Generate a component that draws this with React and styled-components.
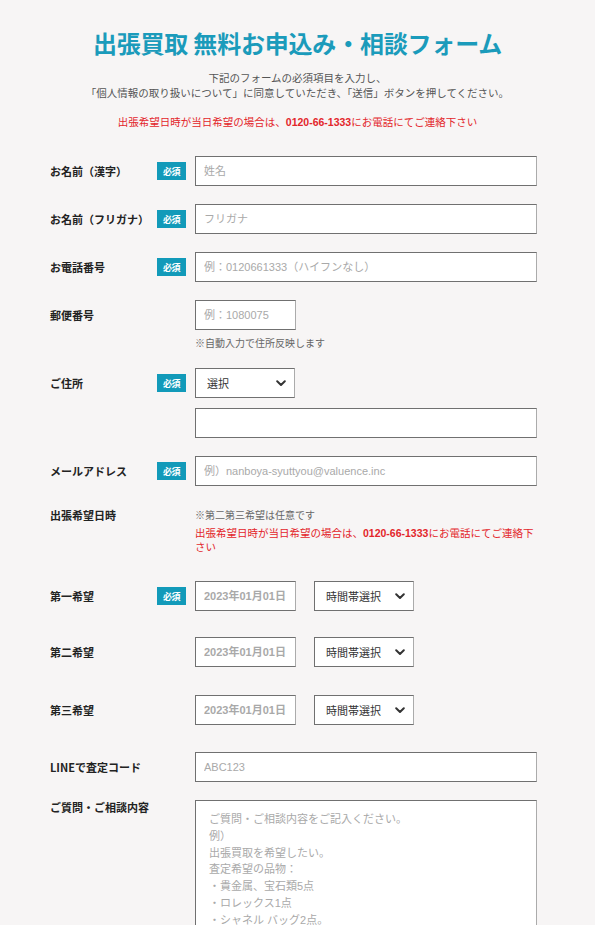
import React from "react";
import styled, { createGlobalStyle } from "styled-components";

const Global = createGlobalStyle`
  html, body { margin: 0; padding: 0; background: #f7f5f5; }
  body { font-family: "Liberation Sans", "Noto Sans CJK JP", sans-serif; color: #222; }
  * { box-sizing: border-box; }
`;

const Page = styled.div`
  width: 595px;
  min-height: 925px;
  background: #f7f5f5;
  padding-top: 28px;
  overflow: hidden;
`;

const Header = styled.header`
  text-align: center;
`;

const Title = styled.h1`
  margin: 0;
  font-size: 24px;
  line-height: 30px;
  font-weight: 700;
  color: #1b9bbb;
  letter-spacing: -0.2px;
  font-family: "Noto Sans CJK JP", sans-serif;
`;

const Lead = styled.p`
  margin: 13px 0 0;
  font-size: 10.5px;
  line-height: 14.5px;
  color: #555;
  font-family: "Noto Sans CJK JP", sans-serif;
`;

const Alert = styled.p`
  margin: ${(p) => (p.$inline ? "4px 0 0" : "15px 0 0")};
  font-size: 10.5px;
  line-height: 14px;
  color: #e3262b;
  text-align: ${(p) => (p.$inline ? "left" : "center")};
  font-family: "Noto Sans CJK JP", sans-serif;
  b { font-family: "Liberation Sans", sans-serif; font-weight: 700; line-height: 14px; }
`;

const Form = styled.form`
  margin-top: 27px;
  padding: 0 0 0 50px;
  display: flex;
  flex-direction: column;
  gap: 18px;
`;

const Row = styled.div`
  display: grid;
  grid-template-columns: 107px 38px 342px;
  align-items: start;
  margin-top: ${(p) => p.$space || "0"};
  padding-top: ${(p) => (p.$info ? "4px" : "0")};
`;

const Label = styled.div`
  min-height: ${(p) => (p.$info ? "14px" : "30px")};
  display: flex;
  align-items: center;
  font-size: 11px;
  line-height: 14px;
  font-weight: 700;
  color: #222;
  font-family: "Noto Sans CJK JP", sans-serif;
`;

const BadgeCell = styled.div`
  min-height: 30px;
  display: flex;
  align-items: center;
`;

const Badge = styled.span`
  display: inline-flex;
  align-items: center;
  justify-content: center;
  width: 29px;
  height: 18px;
  background: #129ab9;
  color: #fff;
  font-size: 9px;
  font-weight: 700;
  font-family: "Noto Sans CJK JP", sans-serif;
  letter-spacing: -0.5px;
`;

const Field = styled.div`
  display: flex;
  flex-direction: column;
  gap: 10px;
`;

const Inline = styled.div`
  display: flex;
  gap: 18px;
`;

const fieldBorder = `
  border: 1px solid #707070;
  border-right-color: #ababab;
  background: #fff;
`;

const TextInput = styled.input`
  ${fieldBorder}
  width: ${(p) => p.$w || "342px"};
  height: 30px;
  padding: 0 8px;
  font-size: 11px;
  font-family: "Liberation Sans", "Noto Sans CJK JP", sans-serif;
  color: #333;
  outline: none;
  &::placeholder {
    color: #a9a9a9;
    font-weight: ${(p) => (p.$boldPh ? 700 : 400)};
  }
`;

const Note = styled.div`
  font-size: 10px;
  line-height: 14px;
  color: #666;
  font-family: "Noto Sans CJK JP", sans-serif;
  margin-top: ${(p) => (p.$tight ? "0" : "-4px")};
`;

const SelectWrap = styled.div`
  position: relative;
  width: 100px;
  height: 30px;
`;

const Select = styled.select`
  ${fieldBorder}
  appearance: none;
  width: 100%;
  height: 100%;
  padding: 0 24px 0 11px;
  font-size: 11px;
  color: #333;
  font-family: "Noto Sans CJK JP", sans-serif;
  outline: none;
`;

const Chevron = styled.svg`
  position: absolute;
  right: 9px;
  top: 12px;
  pointer-events: none;
`;

const TextArea = styled.textarea`
  ${fieldBorder}
  width: 342px;
  height: 200px;
  padding: 10px 13px;
  font-size: 11px;
  line-height: 16.8px;
  font-family: "Liberation Sans", "Noto Sans CJK JP", sans-serif;
  resize: none;
  outline: none;
  &::placeholder { color: #a9a9a9; }
`;

function Dropdown({ label }) {
  return (
    <SelectWrap>
      <Select defaultValue="">
        <option value="">{label}</option>
      </Select>
      <Chevron width="10" height="7" viewBox="0 0 10 7">
        <path d="M1.2 1.3 L5 5 L8.8 1.3" fill="none" stroke="#333" strokeWidth="2" strokeLinecap="round" strokeLinejoin="round" />
      </Chevron>
    </SelectWrap>
  );
}

function FieldRow({ label, required, space, children }) {
  return (
    <Row $space={space}>
      <Label>{label}</Label>
      <BadgeCell>{required && <Badge>必須</Badge>}</BadgeCell>
      <Field>{children}</Field>
    </Row>
  );
}

const placeholderText =
  "ご質問・ご相談内容をご記入ください。\n例）\n出張買取を希望したい。\n査定希望の品物：\n・貴金属、宝石類5点\n・ロレックス1点\n・シャネル バッグ2点。\n\n";

export default function App() {
  return (
    <Page>
      <Global />
      <Header>
        <Title>出張買取 無料お申込み・相談フォーム</Title>
        <Lead>
          下記のフォームの必須項目を入力し、
          <br />
          「個人情報の取り扱いについて」に同意していただき、「送信」ボタンを押してください。
        </Lead>
        <Alert>
          出張希望日時が当日希望の場合は、<b>0120-66-1333</b>にお電話にてご連絡下さい
        </Alert>
      </Header>
      <Form onSubmit={(e) => e.preventDefault()}>
        <FieldRow label="お名前（漢字）" required>
          <TextInput placeholder="姓名" />
        </FieldRow>
        <FieldRow label="お名前（フリガナ）" required>
          <TextInput placeholder="フリガナ" />
        </FieldRow>
        <FieldRow label="お電話番号" required>
          <TextInput placeholder="例：0120661333（ハイフンなし）" />
        </FieldRow>
        <FieldRow label="郵便番号">
          <TextInput $w="101px" placeholder="例：1080075" />
          <Note>※自動入力で住所反映します</Note>
        </FieldRow>
        <FieldRow label="ご住所" required>
          <Dropdown label="選択" />
          <TextInput />
        </FieldRow>
        <FieldRow label="メールアドレス" required>
          <TextInput placeholder="例）nanboya-syuttyou@valuence.inc" />
        </FieldRow>
        <Row $info>
          <Label $info>出張希望日時</Label>
          <div />
          <div>
            <Note $tight>※第二第三希望は任意です</Note>
            <Alert $inline>
              出張希望日時が当日希望の場合は、<b>0120-66-1333</b>にお電話にてご連絡下さい
            </Alert>
          </div>
        </Row>
        <FieldRow label="第一希望" required space="9px">
          <Inline>
            <TextInput $w="101px" $boldPh placeholder="2023年01月01日" />
            <Dropdown label="時間帯選択" />
          </Inline>
        </FieldRow>
        <FieldRow label="第二希望" space="8px">
          <Inline>
            <TextInput $w="101px" $boldPh placeholder="2023年01月01日" />
            <Dropdown label="時間帯選択" />
          </Inline>
        </FieldRow>
        <FieldRow label="第三希望" space="10px">
          <Inline>
            <TextInput $w="101px" $boldPh placeholder="2023年01月01日" />
            <Dropdown label="時間帯選択" />
          </Inline>
        </FieldRow>
        <FieldRow label="LINEで査定コード" space="9px">
          <TextInput placeholder="ABC123" />
        </FieldRow>
        <Row>
          <Label $info>ご質問・ご相談内容</Label>
          <div />
          <TextArea placeholder={placeholderText} />
        </Row>
      </Form>
    </Page>
  );
}
